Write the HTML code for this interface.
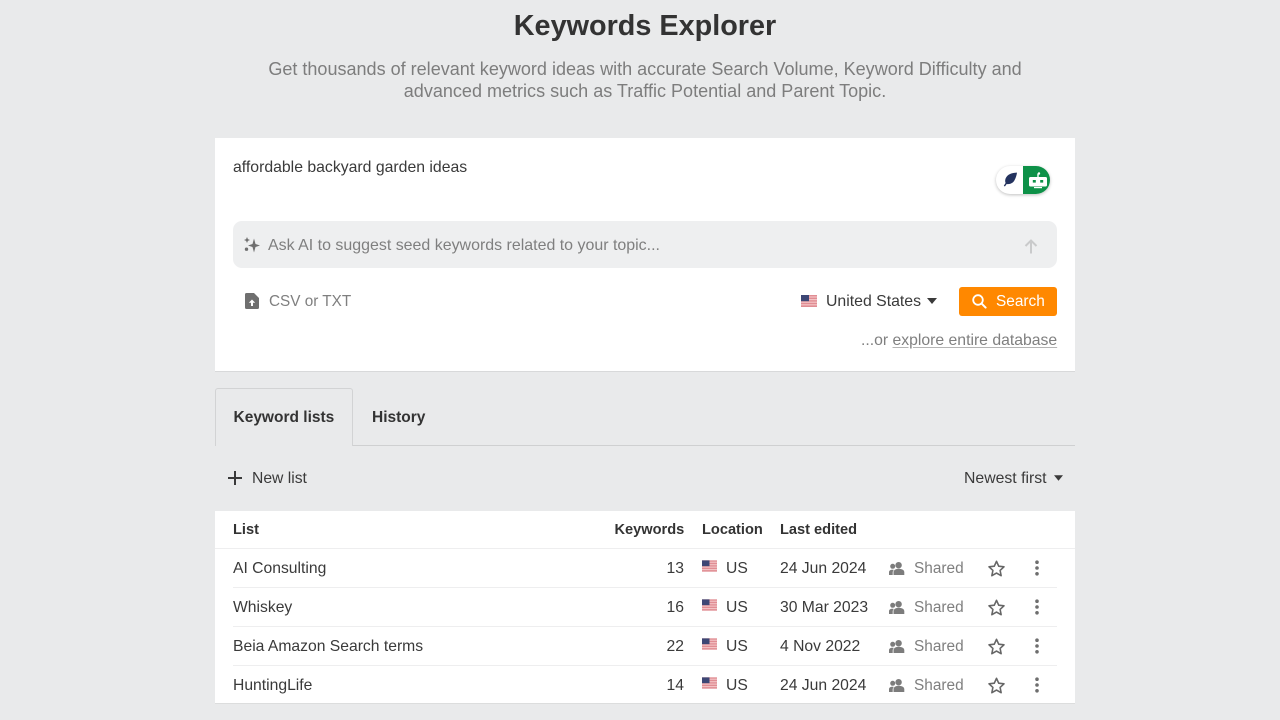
<!DOCTYPE html>
<html lang="en">
<head>
<meta charset="utf-8">
<title>Keywords Explorer</title>
<style>
html,body{margin:0;padding:0;width:1280px;height:720px;overflow:hidden;background:#e9eaeb;font-family:"Liberation Sans",sans-serif;color:#3a3a3a}
.t{position:absolute;white-space:nowrap;font-size:15.7px;line-height:20px}
.h{font-size:14.6px;font-weight:700;color:#333}
.s{font-size:15.4px;color:#7f7f7f}
.b{position:absolute;background:#fff}
.g{color:#7f7f7f}
.r{text-align:right}
svg{position:absolute;display:block}
.line{position:absolute;left:215px;width:860px;height:1px}
</style>
</head>
<body>
<svg width="0" height="0" style="position:absolute">
<defs>
<symbol id="flag" viewBox="0 0 16 12">
<rect width="16" height="12" fill="#f3c3c5"/>
<rect y="0" width="16" height="1.4" fill="#e08d93"/><rect y="2.6" width="16" height="1.4" fill="#e08d93"/><rect y="5.2" width="16" height="1.4" fill="#e08d93"/><rect y="7.8" width="16" height="1.4" fill="#e08d93"/><rect y="10.4" width="16" height="1.6" fill="#e08d93"/>
<rect width="8" height="6.2" fill="#3d4775"/>
</symbol>
<symbol id="people" viewBox="0 0 16 14">
<circle cx="9.600" cy="4.200" r="3.200" fill="#7c7c7c"/>
<circle cx="3.700" cy="5.300" r="2.500" fill="#7c7c7c"/>
<path d="M4.800 14v-2.800c0-2 2-3.200 4.900-3.200s5.300 1.200 5.300 3.200V14z" fill="#7c7c7c" stroke="#7c7c7c" stroke-width=".6"/>
<path d="M0 14v-2.800c0-1.500 1.400-2.400 3.500-2.400.5 0 .9 0 1.300.2-.7.700-1.100 1.500-1.100 2.400V14z" fill="#7c7c7c"/>
</symbol>
<symbol id="star" viewBox="0 0 18 18">
<path d="M9 2.200l2.100 4.600 5 .6-3.700 3.400 1 5L9 13.300l-4.400 2.500 1-5L1.900 7.400l5-.6z" fill="none" stroke="#666" stroke-width="1.500" stroke-linejoin="round"/>
</symbol>
<symbol id="dots" viewBox="0 0 6 16">
<circle cx="3" cy="2.200" r="1.800" fill="#6e6e6e"/><circle cx="3" cy="8" r="1.800" fill="#6e6e6e"/><circle cx="3" cy="13.800" r="1.800" fill="#6e6e6e"/>
</symbol>
</defs>
</svg>

<div class="t" style="left:0;width:1290px;top:9px;text-align:center;font-size:28.800px;line-height:34px;font-weight:700;color:#333">Keywords Explorer</div>
<div class="t" style="left:0;width:1290px;top:58px;text-align:center;font-size:18.050px;line-height:22px;color:#7d7d7d">Get thousands of relevant keyword ideas with accurate Search Volume, Keyword Difficulty and<br>advanced metrics such as Traffic Potential and Parent Topic.</div>

<div class="b" style="left:215px;top:138px;width:860px;height:233px;border-bottom:1px solid #d8d9da"></div>
<div class="t" style="left:233px;top:158px;font-size:15.800px">affordable backyard garden ideas</div>

<div style="position:absolute;left:996px;top:166px;width:54px;height:28px;border-radius:14px;background:#fff;box-shadow:0 1px 3px rgba(0,0,0,.25)"></div>
<div style="position:absolute;left:1023px;top:166px;width:27px;height:28px;border-radius:0 14px 14px 0;background:#0d9148"></div>
<svg style="left:1003px;top:172px" width="15" height="15" viewBox="0 0 15 15"><path d="M14 .6C9 .6 4.300 2.400 2.700 6.300 2 8 2 9.700 2.600 11L.8 13.800l1.100.7 1.800-2.500c3 .6 6.500-.8 8-4.100C12.800 5.700 13.700 3 14 .6z" fill="#24335f"/></svg>
<svg style="left:1028px;top:172px" width="20" height="17" viewBox="0 0 20 17"><rect x="9.300" y="1.500" width="1.400" height="3.500" fill="#fff"/><circle cx="11" cy="1.500" r="1.200" fill="#fff"/><rect x="1" y="5" width="18" height="9.500" rx="1.500" fill="#fff"/><rect x="4.800" y="8" width="3" height="2.600" fill="#0d9148"/><rect x="12.200" y="8" width="3" height="2.600" fill="#0d9148"/><rect x="6" y="15" width="8" height="1.200" fill="#fff"/></svg>

<div style="position:absolute;left:233px;top:221px;width:824px;height:47px;border-radius:9px;background:#eeeff0"></div>
<svg style="left:243px;top:236px" width="18" height="18" viewBox="0 0 18 18"><path d="M11 2.500l1.500 5.500 4.500 1.500-4.500 1.500-1.500 5.500-1.500-5.500L5 9.500 9.500 8z" fill="#6f6f6f"/><path d="M4 1l.9 2.100L7 4l-2.100.9L4 7l-.9-2.100L1 4l2.100-.9z" fill="#6f6f6f"/><circle cx="3.500" cy="13.200" r="1.700" fill="#6f6f6f"/></svg>
<div class="t g" style="left:268px;top:236px;font-size:15.960px">Ask AI to suggest seed keywords related to your topic...</div>
<svg style="left:1023px;top:238px" width="16" height="17" viewBox="0 0 16 17"><path d="M8 15.500V2.500M2.500 8L8 2.500 13.500 8" fill="none" stroke="#c9cacb" stroke-width="2"/></svg>

<svg style="left:245px;top:293px" width="14" height="16" viewBox="0 0 14 16"><path d="M1.500 0H9l5 5v9.500a1.500 1.500 0 0 1-1.500 1.500h-11A1.500 1.500 0 0 1 0 14.500v-13A1.500 1.500 0 0 1 1.500 0z" fill="#6f6f6f"/><path d="M7 6.500L3.800 9.700h2.200V13h2V9.700h2.200z" fill="#fff"/></svg>
<div class="t g" style="left:269px;top:292px;font-size:15.300px">CSV or TXT</div>

<svg style="left:801px;top:295px" width="16" height="12"><use href="#flag"/></svg>
<div class="t" style="left:826px;top:292px;font-size:15.830px">United States</div>
<svg style="left:927px;top:298px" width="10" height="6" viewBox="0 0 10 6"><path d="M0 0h10L5 6z" fill="#3a3a3a"/></svg>

<div style="position:absolute;left:959px;top:287px;width:98px;height:29px;border-radius:3px;background:#ff8800"></div>
<svg style="left:972px;top:294px" width="15" height="15" viewBox="0 0 15 15"><circle cx="6" cy="6" r="4.800" fill="none" stroke="#fff" stroke-width="1.800"/><path d="M9.600 9.600L13.600 13.600" stroke="#fff" stroke-width="2" stroke-linecap="round"/></svg>
<div class="t" style="left:996px;top:292px;color:#fff;font-size:15.400px">Search</div>

<div class="t g" style="left:861px;top:331px;font-size:15.760px">...or <span style="text-decoration:underline;text-decoration-color:#b5b5b5;text-underline-offset:2px">explore entire database</span></div>

<div class="line" style="top:445px;background:#cfd0d1"></div>
<div style="position:absolute;left:215px;top:388px;width:138px;height:58px;box-sizing:border-box;border:1px solid #d2d3d4;border-bottom:none;border-radius:3px 3px 0 0;background:#e9eaeb"></div>
<div class="t" style="left:233.500px;top:408px;font-weight:700;color:#333;font-size:15.500px">Keyword lists</div>
<div class="t" style="left:372px;top:408px;font-weight:700;color:#333;font-size:15.500px">History</div>

<svg style="left:228px;top:471px" width="14" height="14" viewBox="0 0 14 14"><path d="M7 0v14M0 7h14" stroke="#3a3a3a" stroke-width="2"/></svg>
<div class="t" style="left:252px;top:469px">New list</div>
<div class="t" style="left:964px;top:469px;font-size:15.800px">Newest first</div>
<svg style="left:1054px;top:475px" width="9" height="6" viewBox="0 0 10 6"><path d="M0 0h10L5 6z" fill="#3a3a3a"/></svg>

<div class="b" style="left:215px;top:511px;width:860px;height:192px;border-bottom:1px solid #dcdddd"></div>
<div class="line" style="top:548px;background:#eeeeef"></div>
<div class="line" style="top:587px;background:#eeeeef;left:233px;width:824px"></div>
<div class="line" style="top:626px;background:#eeeeef;left:233px;width:824px"></div>
<div class="line" style="top:665px;background:#eeeeef;left:233px;width:824px"></div>

<div class="t h" style="left:233px;top:520px">List</div>
<div class="t h" style="left:614.500px;top:520px">Keywords</div>
<div class="t h" style="left:702px;top:520px">Location</div>
<div class="t h" style="left:780px;top:520px">Last edited</div>

<!-- Row 1 -->
<div class="t" style="left:233px;top:559px">AI Consulting</div>
<div class="t r" style="left:640px;width:44px;top:559px">13</div>
<svg style="left:702px;top:560px" width="15" height="12"><use href="#flag"/></svg>
<div class="t" style="left:726px;top:559px">US</div>
<div class="t" style="left:780px;top:559px">24 Jun 2024</div>
<svg style="left:889px;top:561px" width="16" height="14"><use href="#people"/></svg>
<div class="t s" style="left:914px;top:559px">Shared</div>
<svg style="left:987px;top:559px" width="19" height="19"><use href="#star"/></svg>
<svg style="left:1034px;top:560px" width="6" height="16"><use href="#dots"/></svg>

<!-- Row 2 -->
<div class="t" style="left:233px;top:598px">Whiskey</div>
<div class="t r" style="left:640px;width:44px;top:598px">16</div>
<svg style="left:702px;top:599px" width="15" height="12"><use href="#flag"/></svg>
<div class="t" style="left:726px;top:598px">US</div>
<div class="t" style="left:780px;top:598px">30 Mar 2023</div>
<svg style="left:889px;top:600px" width="16" height="14"><use href="#people"/></svg>
<div class="t s" style="left:914px;top:598px">Shared</div>
<svg style="left:987px;top:598px" width="19" height="19"><use href="#star"/></svg>
<svg style="left:1034px;top:599px" width="6" height="16"><use href="#dots"/></svg>

<!-- Row 3 -->
<div class="t" style="left:233px;top:637px">Beia Amazon Search terms</div>
<div class="t r" style="left:640px;width:44px;top:637px">22</div>
<svg style="left:702px;top:638px" width="15" height="12"><use href="#flag"/></svg>
<div class="t" style="left:726px;top:637px">US</div>
<div class="t" style="left:780px;top:637px">4 Nov 2022</div>
<svg style="left:889px;top:639px" width="16" height="14"><use href="#people"/></svg>
<div class="t s" style="left:914px;top:637px">Shared</div>
<svg style="left:987px;top:637px" width="19" height="19"><use href="#star"/></svg>
<svg style="left:1034px;top:638px" width="6" height="16"><use href="#dots"/></svg>

<!-- Row 4 -->
<div class="t" style="left:233px;top:676px">HuntingLife</div>
<div class="t r" style="left:640px;width:44px;top:676px">14</div>
<svg style="left:702px;top:677px" width="15" height="12"><use href="#flag"/></svg>
<div class="t" style="left:726px;top:676px">US</div>
<div class="t" style="left:780px;top:676px">24 Jun 2024</div>
<svg style="left:889px;top:678px" width="16" height="14"><use href="#people"/></svg>
<div class="t s" style="left:914px;top:676px">Shared</div>
<svg style="left:987px;top:676px" width="19" height="19"><use href="#star"/></svg>
<svg style="left:1034px;top:677px" width="6" height="16"><use href="#dots"/></svg>
</body>
</html>
